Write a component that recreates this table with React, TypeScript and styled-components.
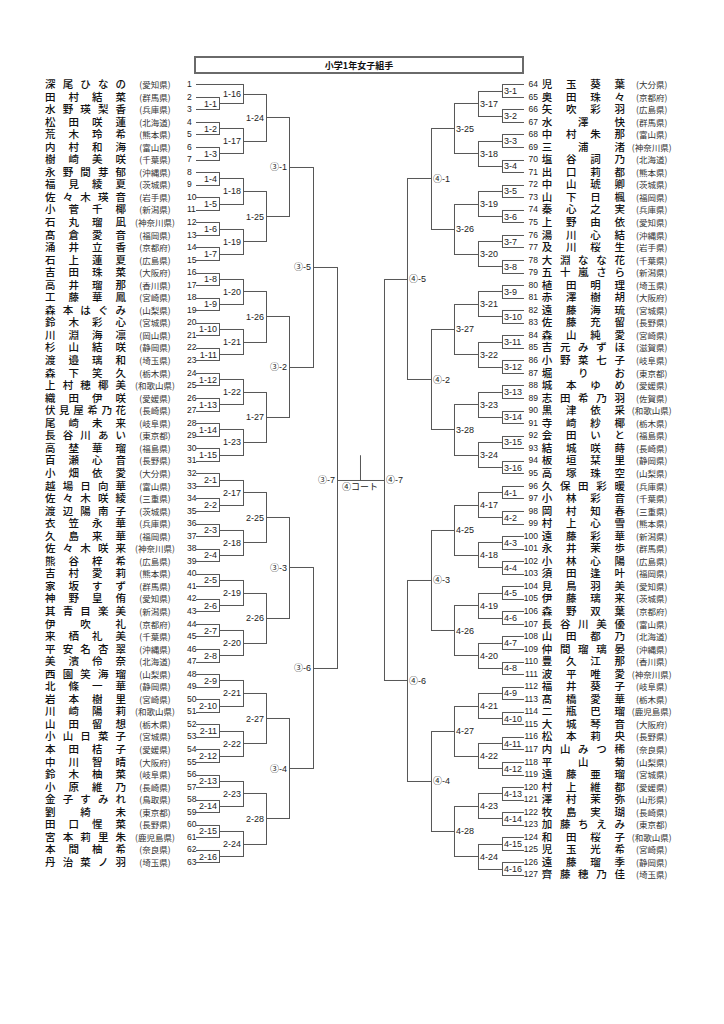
import React from "react";
import styled, { createGlobalStyle } from "styled-components";

const ROW = 12.55;
const TOP = 78;
const rowY = (k: number) => TOP + ROW / 2 + ROW * k;

const LEFT: [string, string][] = [
  ["深尾ひなの", "愛知県"], ["田村結菜", "群馬県"], ["水野瑛梨香", "兵庫県"], ["松田咲蓮", "北海道"],
  ["荒木玲希", "熊本県"], ["内村和海", "富山県"], ["樹崎美咲", "千葉県"], ["永野間芽郁", "沖縄県"],
  ["福見綾夏", "茨城県"], ["佐々木瑛音", "岩手県"], ["小菅千椰", "新潟県"], ["石丸瑠凪", "神奈川県"],
  ["髙倉愛音", "福岡県"], ["涌井立香", "京都府"], ["石上蓮夏", "広島県"], ["吉田珠菜", "大阪府"],
  ["高井瑠那", "香川県"], ["工藤華鳳", "宮崎県"], ["森本はぐみ", "山梨県"], ["鈴木彩心", "宮城県"],
  ["川淵海凛", "岡山県"], ["杉山結咲", "静岡県"], ["渡邉璃和", "埼玉県"], ["森下笑久", "栃木県"],
  ["上村穂椰美", "和歌山県"], ["織田伊咲", "愛媛県"], ["伏見屋希乃花", "長崎県"], ["尾崎未来", "岐阜県"],
  ["長谷川あい", "東京都"], ["高埜華瑠", "福島県"], ["百瀬心音", "長野県"], ["小畑依愛", "大分県"],
  ["越場日向華", "富山県"], ["佐々木咲綾", "三重県"], ["渡辺陽南子", "茨城県"], ["衣笠永華", "兵庫県"],
  ["久島来華", "福岡県"], ["佐々木咲来", "神奈川県"], ["熊谷梓希", "広島県"], ["吉村愛莉", "熊本県"],
  ["家坂すず", "群馬県"], ["神野皇侑", "愛知県"], ["其青目楽美", "新潟県"], ["伊吹礼", "京都府"],
  ["来栖礼美", "千葉県"], ["平安名杏翠", "沖縄県"], ["美濱伶奈", "北海道"], ["西園笑海瑠", "山梨県"],
  ["北條一華", "静岡県"], ["岩本樹里", "宮崎県"], ["川崎陽莉", "和歌山県"], ["山田留想", "栃木県"],
  ["小山日菜子", "宮城県"], ["本田桔子", "愛媛県"], ["中川智晴", "大阪府"], ["鈴木柚菜", "岐阜県"],
  ["小原維乃", "長崎県"], ["金子すみれ", "鳥取県"], ["劉綺未", "東京都"], ["田口惺菜", "長野県"],
  ["宮本莉里朱", "鹿児島県"], ["本間柚希", "奈良県"], ["丹治菜ノ羽", "埼玉県"],
];

const RIGHT: [string, string][] = [
  ["児玉葵葉", "大分県"], ["奥田珠々", "京都府"], ["矢吹彩羽", "広島県"], ["水澤快", "群馬県"],
  ["中村朱那", "富山県"], ["三浦渚", "神奈川県"], ["塩谷詞乃", "北海道"], ["出口莉都", "熊本県"],
  ["中山琥卿", "茨城県"], ["山下日楓", "福岡県"], ["秦心之実", "兵庫県"], ["上野由依", "愛知県"],
  ["湯川心結", "沖縄県"], ["及川桜生", "岩手県"], ["大淵なな花", "千葉県"], ["五十嵐さら", "新潟県"],
  ["植田明理", "埼玉県"], ["赤澤樹胡", "大阪府"], ["遠藤海琉", "宮城県"], ["佐藤充留", "長野県"],
  ["森山純愛", "宮崎県"], ["吉元みずほ", "滋賀県"], ["小野菜七子", "岐阜県"], ["堀りお", "東京都"],
  ["城本ゆめ", "愛媛県"], ["志田希乃羽", "佐賀県"], ["黒津依采", "和歌山県"], ["寺崎紗椰", "栃木県"],
  ["会田いと", "福島県"], ["結城咲蒔", "長崎県"], ["板垣栞里", "静岡県"], ["高塚珠空", "山梨県"],
  ["久保田彩暖", "兵庫県"], ["小林彩音", "千葉県"], ["岡村知春", "三重県"], ["村上心雪", "熊本県"],
  ["遠藤彩華", "新潟県"], ["永井茉歩", "群馬県"], ["小林心陽", "広島県"], ["須田逢叶", "福岡県"],
  ["見鳥羽美", "愛知県"], ["伊藤璃来", "茨城県"], ["森野双葉", "京都府"], ["長谷川美優", "富山県"],
  ["山田都乃", "北海道"], ["仲間瑠璃晏", "沖縄県"], ["豊久江那", "香川県"], ["波平唯愛", "神奈川県"],
  ["福井葵子", "岐阜県"], ["髙橋愛華", "栃木県"], ["二瓶巴瑠", "鹿児島県"], ["大城琴音", "大阪府"],
  ["松本莉央", "長野県"], ["内山みつ稀", "奈良県"], ["平山菊", "山梨県"], ["遠藤亜瑠", "宮城県"],
  ["村上維都", "愛媛県"], ["澤村茉弥", "山形県"], ["牧島実瑚", "長崎県"], ["加藤ちえみ", "東京都"],
  ["和田桜子", "和歌山県"], ["児玉光希", "宮崎県"], ["遠藤瑠季", "静岡県"], ["齊藤穂乃佳", "埼玉県"],
];

type Pt = { x: number; y: number };
type Side = "L" | "R";
type Label = { x: number; y: number; text: string; side: Side };

// builds both halves of the draw, in page coordinates
function buildBracket() {
  const segs: number[][] = [];
  const labels: Label[] = [];
  const join = (a: Pt, b: Pt, x: number, text: string, side: Side, forceY?: number): Pt => {
    segs.push([a.x, a.y, x, a.y], [b.x, b.y, x, b.y], [x, a.y, x, b.y]);
    const y = forceY ?? (a.y + b.y) / 2;
    labels.push({ x: side === "L" ? x - 2 : x + 2, y, text, side });
    return { x, y };
  };

  // right half (players 64-127)
  const rl = (k: number): Pt => ({ x: 523, y: rowY(k) });
  const r1 = Array.from({ length: 32 }, (_, m) =>
    join(rl(2 * m), rl(2 * m + 1), 502, m < 16 ? `3-${m + 1}` : `4-${m - 15}`, "R"));
  const r2 = Array.from({ length: 16 }, (_, n) =>
    join(r1[2 * n], r1[2 * n + 1], 478, n < 8 ? `3-${17 + n}` : `4-${n + 9}`, "R"));
  const r3 = Array.from({ length: 8 }, (_, p) =>
    join(r2[2 * p], r2[2 * p + 1], 454, p < 4 ? `3-${25 + p}` : `4-${21 + p}`, "R"));
  const r4 = Array.from({ length: 4 }, (_, q) => join(r3[2 * q], r3[2 * q + 1], 431, `④-${q + 1}`, "R"));
  const r5 = [join(r4[0], r4[1], 407, "④-5", "R"), join(r4[2], r4[3], 407, "④-6", "R")];
  const rFinal = join(r5[0], r5[1], 384, "④-7", "R");

  // left half (players 1-63, player 1 has a bye)
  const ll = (k: number): Pt => ({ x: 196, y: rowY(k) });
  const l1 = Array.from({ length: 31 }, (_, i) => {
    const m = i + 1;
    return join(ll(2 * m - 1), ll(2 * m), 219, m <= 15 ? `1-${m}` : `2-${m - 15}`, "L");
  });
  const l2 = Array.from({ length: 16 }, (_, i) => {
    const n = i + 1;
    const label = n <= 8 ? `1-${15 + n}` : `2-${n + 8}`;
    return n === 1
      ? join(ll(0), l1[0], 243, label, "L")
      : join(l1[2 * n - 3], l1[2 * n - 2], 243, label, "L");
  });
  const l3 = Array.from({ length: 8 }, (_, i) => {
    const p = i + 1;
    return join(l2[2 * p - 2], l2[2 * p - 1], 266, p <= 4 ? `1-${23 + p}` : `2-${20 + p}`, "L");
  });
  const l4 = Array.from({ length: 4 }, (_, q) => join(l3[2 * q], l3[2 * q + 1], 289, `③-${q + 1}`, "L"));
  const l5 = [join(l4[0], l4[1], 313, "③-5", "L"), join(l4[2], l4[3], 313, "③-6", "L")];
  join(l5[0], l5[1], 337, "③-7", "L", rFinal.y);

  // final
  segs.push([337, rFinal.y, 384, rFinal.y], [360, rFinal.y - 25, 360, rFinal.y]);
  return { segs, labels, finalY: rFinal.y };
}

const BRACKET = buildBracket();
const px = (v: number) => Math.round(v) + 0.5;

const GlobalStyle = createGlobalStyle`
  html, body {
    margin: 0;
    padding: 0;
    background: #fff;
  }
  body {
    font-family: "Noto Sans CJK JP", "Liberation Sans", sans-serif;
    color: #111;
  }
`;

const Page = styled.div`
  width: 724px;
  height: 1024px;
  padding-top: 56px;
  box-sizing: border-box;
  background: #fff;
  overflow: hidden;
`;

const TitleBox = styled.div`
  margin-left: 194px;
  width: 330px;
  height: 18px;
  box-sizing: border-box;
  border: 2px solid #6a6a6a;
  display: flex;
  align-items: center;
  justify-content: center;
  font-size: 9px;
  font-weight: 700;
  color: #111;
`;

const Sheet = styled.div`
  display: flex;
  align-items: flex-start;
  margin-top: 4px;
  padding-left: 45px;
`;

const PlayerList = styled.div<{ $width: number }>`
  width: ${(p) => p.$width}px;
  display: grid;
  grid-auto-rows: ${ROW}px;
`;

const LeftRow = styled.div`
  display: grid;
  grid-template-columns: 81px 58px 12px;
  align-items: center;
`;

const RightRow = styled.div`
  display: grid;
  grid-template-columns: 15px 83.3px 46px;
  column-gap: 3.7px;
  align-items: center;
`;

const Name = styled.div`
  display: flex;
  justify-content: space-between;
  font-size: 10.5px;
  font-weight: 500;
  line-height: ${ROW}px;
  color: #111;
`;

const Pref = styled.div`
  text-align: center;
  font-size: 8.5px;
  line-height: ${ROW}px;
  color: #333;
  white-space: nowrap;
`;

const Seed = styled.div<{ $align: "left" | "right" }>`
  font-family: "Liberation Sans", sans-serif;
  font-size: 8.5px;
  line-height: ${ROW}px;
  color: #222;
  text-align: ${(p) => p.$align};
  padding-left: ${(p) => (p.$align === "left" ? "3px" : "0")};
`;

const Draw = styled.svg`
  display: block;
  flex: none;
  overflow: visible;
`;

const MatchLabel = styled.text`
  font-family: "Liberation Sans", "Noto Sans CJK JP", sans-serif;
  font-size: 9px;
  fill: #222;
`;

const NameText = ({ name }: { name: string }) => (
  <Name>
    {Array.from(name).map((c, i) => (
      <span key={i}>{c}</span>
    ))}
  </Name>
);

const Bracket = () => {
  const d = BRACKET.segs
    .map(([x1, y1, x2, y2]) => `M${px(x1)} ${px(y1)}H${px(x2)}V${px(y2)}`)
    .join("");
  const h = ROW * 64;
  return (
    <Draw width={327} height={h} viewBox={`196 ${TOP} 327 ${h}`}>
      <path d={d} fill="none" stroke="#555" strokeWidth={1} strokeLinecap="square" shapeRendering="crispEdges" />
      {BRACKET.labels.map((l, i) => (
        <MatchLabel key={i} x={l.x} y={l.y + 0.5} textAnchor={l.side === "L" ? "end" : "start"} dominantBaseline="central">
          {l.text}
        </MatchLabel>
      ))}
      <MatchLabel x={360} y={BRACKET.finalY + 7} textAnchor="middle" dominantBaseline="central">
        ④コート
      </MatchLabel>
    </Draw>
  );
};

export default function App() {
  return (
    <Page>
      <GlobalStyle />
      <TitleBox>小学1年女子組手</TitleBox>
      <Sheet>
        <PlayerList $width={151}>
          {LEFT.map(([name, pref], i) => (
            <LeftRow key={i}>
              <NameText name={name} />
              <Pref>({pref})</Pref>
              <Seed $align="left">{i + 1}</Seed>
            </LeftRow>
          ))}
        </PlayerList>
        <Bracket />
        <PlayerList $width={160}>
          {RIGHT.map(([name, pref], i) => (
            <RightRow key={i}>
              <Seed $align="right">{i + 64}</Seed>
              <NameText name={name} />
              <Pref>({pref})</Pref>
            </RightRow>
          ))}
        </PlayerList>
      </Sheet>
    </Page>
  );
}
